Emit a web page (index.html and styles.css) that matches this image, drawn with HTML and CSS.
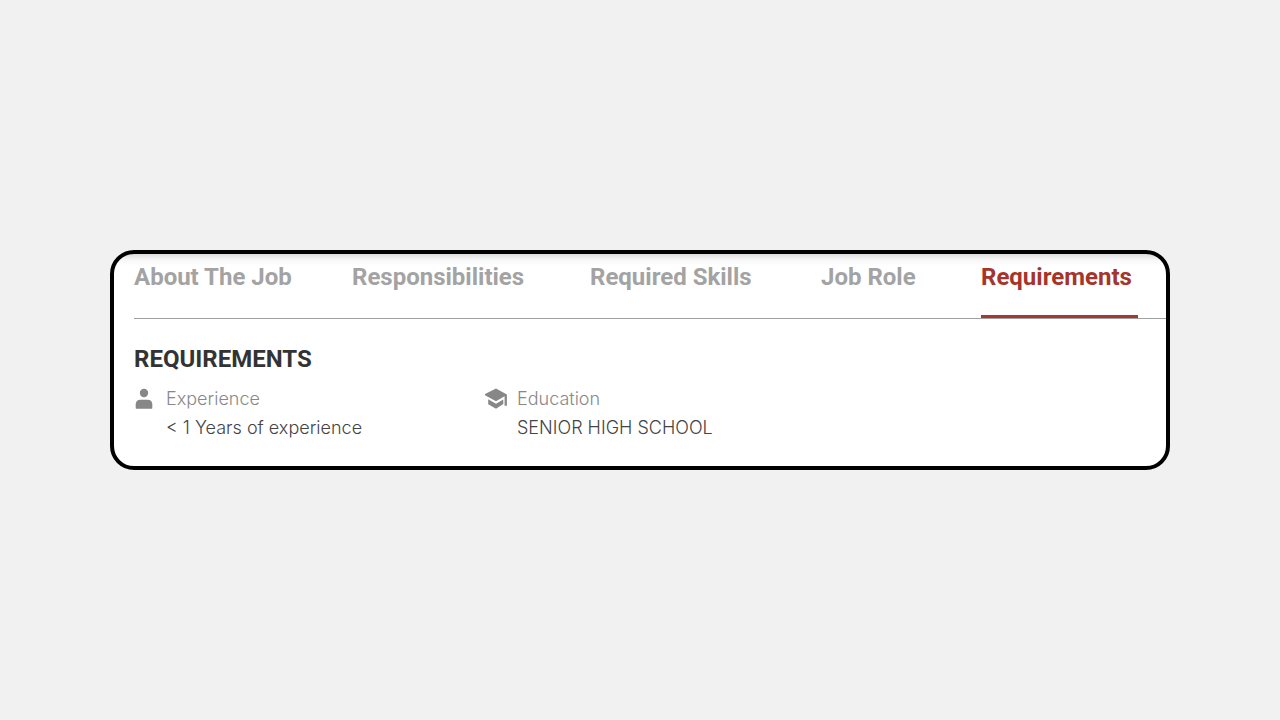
FILE: index.html
```html
<!DOCTYPE html>
<html lang="en">
<head>
<meta charset="utf-8">
<title>Job requirements</title>
<link rel="stylesheet" href="styles.css">
</head>
<body>
<main class="card">
  <nav class="tabs" aria-label="Job sections">
    <button class="tab" type="button">About The Job</button>
    <button class="tab" type="button">Responsibilities</button>
    <button class="tab" type="button">Required Skills</button>
    <button class="tab" type="button">Job Role</button>
    <button class="tab tab-active" type="button" aria-current="true">Requirements</button>
  </nav>
  <section class="requirements">
    <h2 class="heading">REQUIREMENTS</h2>
    <dl class="facts">
      <div class="fact">
        <svg class="icon" viewBox="0 0 22 22" aria-hidden="true"><circle cx="10" cy="5" r="4.200"/><path d="M1.700 20v-3.500q0-4.800 4.800-4.800h7q4.800 0 4.800 4.800V20q0 .7-.7.7H2.400q-.7 0-.7-.7z"/></svg>
        <dt class="label">Experience</dt>
        <dd class="value">&lt; 1 Years of experience</dd>
      </div>
      <div class="fact">
        <svg class="icon" viewBox="0 0 22 22" aria-hidden="true"><path d="M11 .5 21.900 6.500V17.800H19.600V8.200L11 13.300 0 7.300V6z"/><path d="M3.200 11.300 11 15.800 18.300 11.500V16L11 20.700 3.200 16.200z"/></svg>
        <dt class="label">Education</dt>
        <dd class="value">SENIOR HIGH SCHOOL</dd>
      </div>
    </dl>
  </section>
</main>
</body>
</html>
```
FILE: styles.css
```css
* {
  box-sizing: border-box;
}

body {
  margin: 0;
  min-height: 100vh;
  padding: 0 110px;
  display: flex;
  align-items: center;
  background: #f1f1f1;
  font-family: Roboto, "Liberation Sans", sans-serif;
}

.card {
  flex: 1;
  padding: 0 0 24px 20px;
  border: 4px solid #000;
  border-radius: 24px;
  overflow: hidden;
  background: linear-gradient(#dcdcdc, #f8f8f8 6px, #fff 12px) padding-box;
}

.tabs {
  display: grid;
  grid-template-columns: 218fr 238fr 231fr 160fr 157fr;
  padding-right: 28px;
  border-bottom: 1px solid #a0a0a0;
}

.tab {
  padding: 8px 0 23px;
  border: 0;
  border-bottom: 3px solid transparent;
  background: none;
  color: #a3a3a3;
  font: 700 24px/30px Roboto, "Liberation Sans", sans-serif;
  text-align: left;
  white-space: nowrap;
  cursor: pointer;
}

.tab-active {
  border-color: #a33a31;
  color: #a6342b;
}

.requirements {
  padding-top: 24px;
}

.heading {
  margin: 0;
  color: #333;
  font-size: 24px;
  line-height: 32px;
}

.facts {
  display: flex;
  margin: 9px 0 0;
}

.fact {
  flex: 0 0 351px;
  display: grid;
  grid-template-columns: 22px 1fr;
  column-gap: 10px;
  align-items: center;
  font: 300 18px/29px Inter, "Liberation Sans", sans-serif;
}

.icon {
  width: 22px;
  height: 22px;
  fill: #878787;
}

.label {
  color: #888;
}

.value {
  grid-column: 2;
  margin: 0;
  color: #444;
}
```
